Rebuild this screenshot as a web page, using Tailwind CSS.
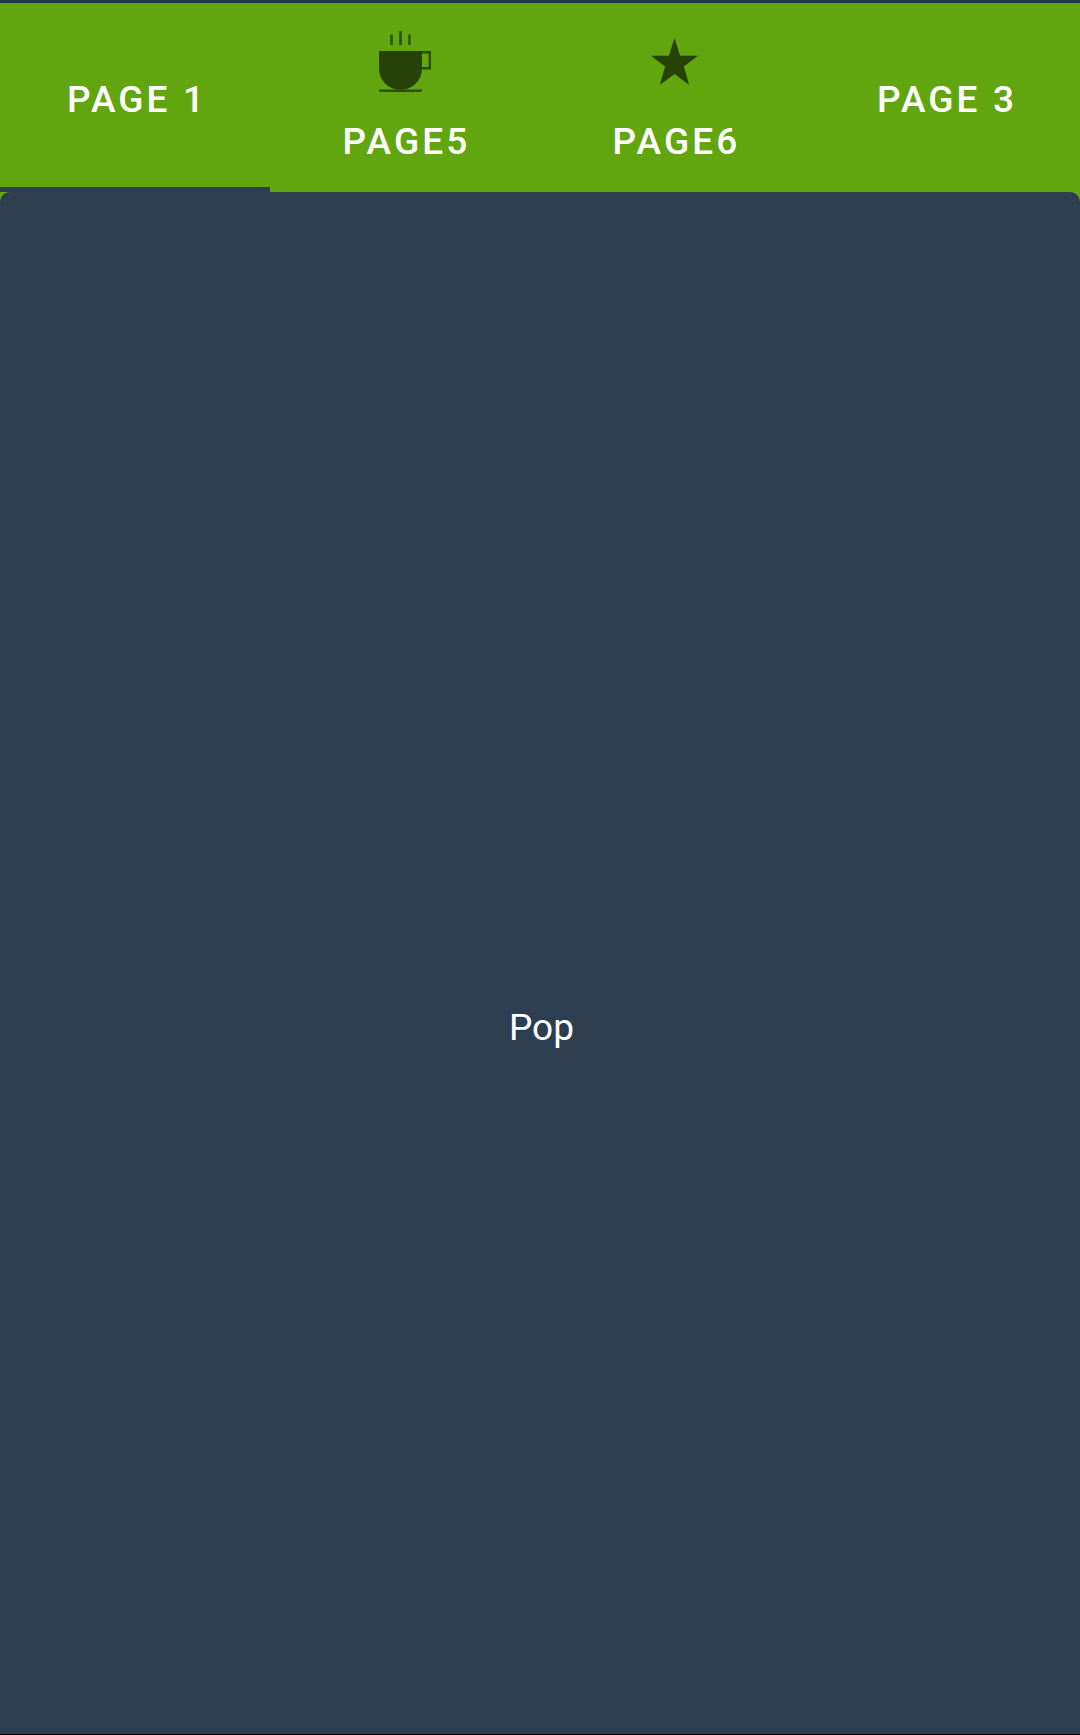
<!DOCTYPE html>
<html lang="en"><head><meta charset="utf-8"><title>Pages</title><script src="https://cdn.jsdelivr.net/npm/@tailwindcss/browser@4"></script></head>
<body class="flex h-[1735px] w-[1080px] flex-col overflow-hidden bg-[#61a60e] font-['Roboto',sans-serif] text-white">
<div class="h-[3px] shrink-0 bg-[#1e374c]"></div>
<nav class="grid h-[189px] shrink-0 grid-cols-4 text-[37px] font-medium leading-[50px] tracking-[3.1px]">
<div class="flex items-center justify-center border-b-[5px] border-[#2c3e50] pt-[9px] pl-[4px]">PAGE 1</div>
<div class="flex flex-col items-center pt-[22px]">
<svg class="h-[72px] w-[72px]" viewBox="0 0 72 72"><path d="M10 26h43v17.500a21.500 21.500 0 0 1-43 0z" fill="#264207"/><path d="M21.300 9.500h2.500V20h-2.500zM30.200 6h2.600v14h-2.600zM39.200 9.500h2.500V20h-2.500zM10 64.600h43v2.400H10z" fill="#2d4f08"/><path d="M53 27.200h7.800v16.100H53" fill="none" stroke="#2d4f08" stroke-width="2.400"/></svg>
<span class="mt-[20px] pl-[3px]">PAGE5</span></div>
<div class="flex flex-col items-center pt-[22px]">
<svg class="h-[72px] w-[72px]" viewBox="0 0 72 72"><path fill="#264207" d="M35.500 13l5.600 17.700H59L44.900 41.500 50.200 60 35.500 49 20.800 60 26.100 41.500 12 30.700h17.900z"/></svg>
<span class="mt-[20px] pl-[3px]">PAGE6</span></div>
<div class="flex items-center justify-center pt-[4px] pl-[4px]">PAGE 3</div>
</nav>
<main class="flex grow items-center justify-center rounded-t-[10px] border-b border-black bg-[#2c3e50] pt-[129px] pl-[3px] text-[37px]">Pop</main>
</body></html>
